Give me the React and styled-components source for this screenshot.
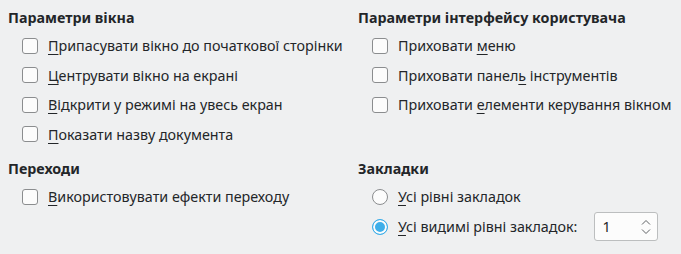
import React from 'react'
import styled, { createGlobalStyle } from 'styled-components'

const Global = createGlobalStyle`
  html, body {
    margin: 0;
    background: #eff0f1;
  }
  body {
    font-family: "Noto Sans", "Open Sans", sans-serif;
    font-size: 14.3px;
    color: #232629;
  }
`

const Page = styled.div`
  display: grid;
  grid-template-columns: 350px 1fr;
  padding: 9px 0 0 8px;
  height: 254px;
  box-sizing: border-box;
`

const Group = styled.div`
  display: flex;
  flex-direction: column;
  margin-top: ${p => (p.second ? '11px' : '0')};
`

const Title = styled.div`
  font-weight: 700;
  line-height: 18px;
  height: 18px;
  margin-bottom: 4px;
`

const Row = styled.label`
  display: flex;
  align-items: center;
  height: ${p => (p.tall ? '30px' : '29.5px')};
  padding-left: 14px;
  white-space: nowrap;
`

const Box = styled.span`
  width: 16px;
  height: 16px;
  box-sizing: border-box;
  border: 1px solid #8b8d8f;
  border-radius: 3px;
  background: #fcfcfc;
  margin-right: 10px;
  flex-shrink: 0;
`

const Radio = styled.span`
  width: 16px;
  height: 16px;
  box-sizing: border-box;
  border-radius: 50%;
  border: 1px solid ${p => (p.checked ? '#3daee9' : '#8b8d8f')};
  background: ${p => (p.checked ? '#3daee9' : '#fcfcfc')};
  box-shadow: ${p => (p.checked ? 'inset 0 0 0 2px #fcfcfc' : 'none')};
  margin-right: 10px;
  flex-shrink: 0;
`

const Key = styled.span`
  text-decoration: underline;
  text-underline-offset: 3px;
  text-decoration-thickness: 1px;
`

const Spin = styled.div`
  display: flex;
  align-items: center;
  justify-content: space-between;
  width: 64px;
  height: 29px;
  box-sizing: border-box;
  margin-left: 17px;
  padding: 0 6px 0 7px;
  border: 1px solid #bcbebf;
  border-radius: 3px;
  background: #fcfcfc;
`

function Arrows() {
  return (
    <svg width="10" height="18" viewBox="0 0 10 18" fill="none" stroke="#5f6265" strokeWidth="1">
      <path d="M1 6.5 L5 2.5 L9 6.5" />
      <path d="M1 11.5 L5 15.5 L9 11.5" />
    </svg>
  )
}

function Check({ children }) {
  return (
    <Row>
      <Box />
      <span>{children}</span>
    </Row>
  )
}

export default function App() {
  return (
    <>
      <Global />
      <Page>
        <div>
          <Group>
            <Title>Параметри вікна</Title>
            <Check><Key>П</Key>рипасувати вікно до початкової сторінки</Check>
            <Check><Key>Ц</Key>ентрувати вікно на екрані</Check>
            <Check><Key>В</Key>ідкрити у режимі на увесь екран</Check>
            <Check><Key>П</Key>оказати назву документа</Check>
          </Group>
          <Group second>
            <Title>Переходи</Title>
            <Check><Key>В</Key>икористовувати ефекти переходу</Check>
          </Group>
        </div>
        <div>
          <Group>
            <Title>Параметри інтерфейсу користувача</Title>
            <Check>Приховати <Key>м</Key>еню</Check>
            <Check>Приховати панел<Key>ь</Key> інструментів</Check>
            <Check>Приховати <Key>е</Key>лементи керування вікном</Check>
            <Row />
          </Group>
          <Group second>
            <Title>Закладки</Title>
            <Row>
              <Radio />
              <span><Key>У</Key>сі рівні закладок</span>
            </Row>
            <Row tall>
              <Radio checked />
              <span><Key>У</Key>сі видимі рівні закладок:</span>
              <Spin>
                <span>1</span>
                <Arrows />
              </Spin>
            </Row>
          </Group>
        </div>
      </Page>
    </>
  )
}
